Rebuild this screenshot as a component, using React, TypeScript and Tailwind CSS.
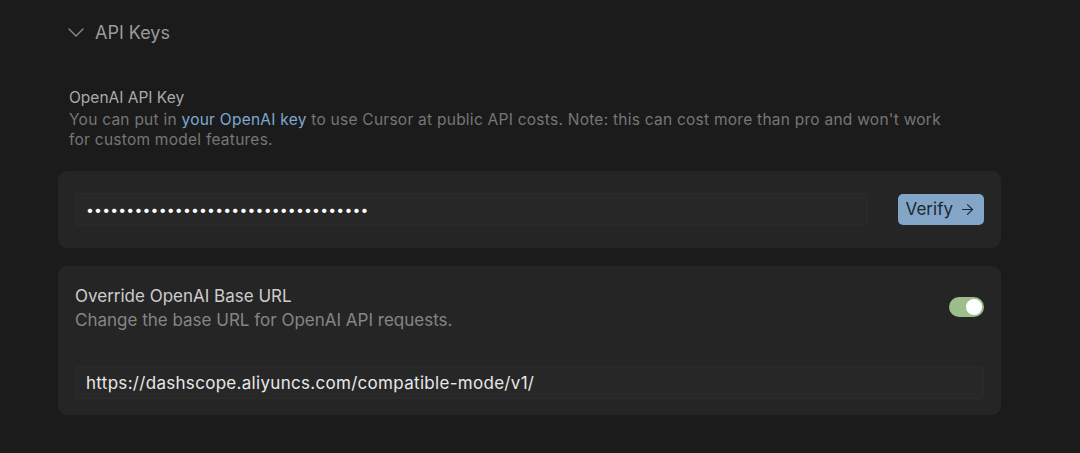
import React, { useState } from 'react';
import { ArrowRight } from 'lucide-react';

export default function App() {
  const [overrideOn, setOverrideOn] = useState(true);
  const [apiKey, setApiKey] = useState('sk-0123456789abcdefghijklmnopqrstuv');
  const [baseUrl, setBaseUrl] = useState('https://dashscope.aliyuncs.com/compatible-mode/v1/');

  return (
    <div
      className="min-h-[453px] w-full bg-[#1b1b1b] pl-[58px] pt-[20px] text-[#cccccc]"
      style={{ fontFamily: 'Inter, "Noto Sans", sans-serif' }}
    >
      <div className="w-[943px]">
        {/* section header */}
        <button className="flex h-[24px] items-center gap-[11px] pl-[10px] text-[18px] text-[#9a9a9a]">
          <svg width="16" height="9" viewBox="0 0 16 9" fill="none" className="shrink-0">
            <path d="M1 1l7 7 7-7" stroke="#8a8a8a" strokeWidth="1.4" strokeLinecap="round" strokeLinejoin="round" />
          </svg>
          API Keys
        </button>

        {/* openai key */}
        <div className="mt-[44px] pl-[11px]">
          <div className="text-[15.5px] leading-[20px] text-[#ababab]">OpenAI API Key</div>
          <p className="mt-[2px] w-[875px] text-[15.5px] leading-[20px] tracking-[0.25px] text-[#767676]">
            You can put in <span className="text-[#7fa9d2]">your OpenAI key</span> to use Cursor at public API costs.
            Note: this can cost more than pro and won't work for custom model features.
          </p>
        </div>

        <div className="mt-[21px] flex h-[77px] items-center gap-[30px] rounded-[9px] bg-[#252525] pl-[17px] pr-[17px]">
          <input
            type="password"
            value={apiKey}
            onChange={(e) => setApiKey(e.target.value)}
            className="h-[33px] flex-1 rounded-[3px] border border-[#2b2b2b] bg-[#272727] px-[10px] text-[14px] tracking-[0.2px] text-white outline-none"
          />
          <button className="flex h-[31px] items-center gap-[6px] rounded-[5px] bg-[#82a5c8] px-[8px] text-[17px] text-[#1d2733]">
            Verify
            <ArrowRight size={17} strokeWidth={1.6} />
          </button>
        </div>

        {/* base url */}
        <div className="mt-[18px] rounded-[9px] bg-[#252525] px-[17px] pb-[16px] pt-[19px]">
          <div className="flex items-start justify-between">
            <div>
              <div className="text-[17px] leading-[22px] text-[#cdcdcd]">Override OpenAI Base URL</div>
              <div className="mt-[2px] text-[17px] leading-[22px] text-[#858585]">
                Change the base URL for OpenAI API requests.
              </div>
            </div>
            <button
              onClick={() => setOverrideOn(!overrideOn)}
              className={`mt-[12px] flex h-[20px] w-[35px] items-center rounded-full px-[2px] ${
                overrideOn ? 'justify-end bg-[#9dbd8c]' : 'justify-start bg-[#444444]'
              }`}
            >
              <span className="h-[16px] w-[16px] rounded-full bg-white" />
            </button>
          </div>
          <input
            value={baseUrl}
            onChange={(e) => setBaseUrl(e.target.value)}
            className="mt-[35px] h-[33px] w-full rounded-[3px] border border-[#2b2b2b] bg-[#272727] px-[10px] text-[17px] tracking-[0.3px] text-[#e8e8e8] outline-none"
          />
        </div>
      </div>
    </div>
  );
}
